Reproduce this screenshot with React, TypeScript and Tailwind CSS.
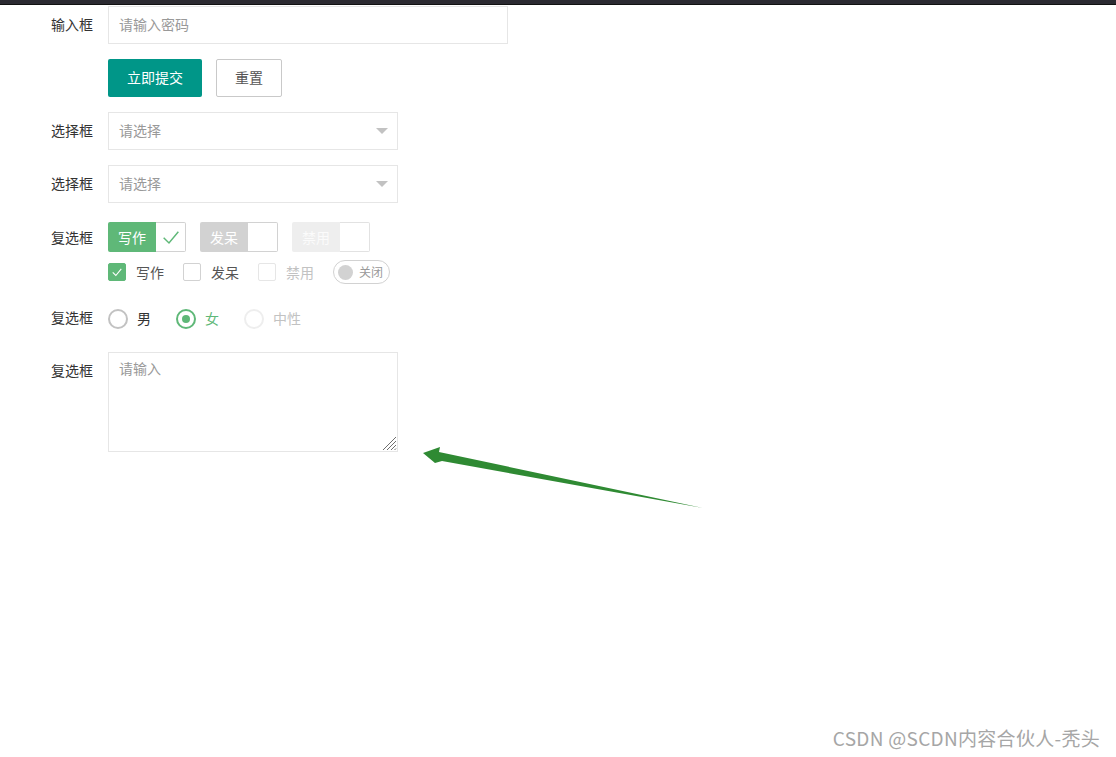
import { useState } from "react";

const FONT = { fontFamily: '"Noto Sans CJK SC", "Noto Sans", sans-serif' };

function Label({ children }: { children: string }) {
  return (
    <label className="w-[108px] shrink-0 pr-[15px] text-right text-sm leading-[36px] text-[#333]">
      {children}
    </label>
  );
}

function SelectBox() {
  return (
    <div className="flex h-[38px] w-[290px] items-center justify-between border border-[#e6e6e6] bg-white pb-[2px] pl-[10px] pr-[9px] text-sm text-[#999]">
      <span>请选择</span>
      <span className="mt-[2px] h-0 w-0 border-x-[6px] border-t-[6px] border-x-transparent border-t-[#c2c2c2]" />
    </div>
  );
}

function Check({ size = 18, color = "#fff", width = 1.4 }: { size?: number; color?: string; width?: number }) {
  return (
    <svg width={size} height={size} viewBox="0 0 18 18" fill="none">
      <path d="M3.5 9.5 L7.5 13.5 L14.5 5" stroke={color} strokeWidth={width} />
    </svg>
  );
}

function PrimaryCheckbox({ text, state }: { text: string; state: "on" | "off" | "disabled" }) {
  const block =
    state === "on" ? "bg-[#5fb878] text-white" : state === "off" ? "bg-[#d2d2d2] text-white" : "bg-[#eee] text-[#fbfbfb]";
  return (
    <div className="flex h-[30px] w-[78px]">
      <span className={`flex w-[48px] items-center justify-center rounded-l-[2px] pb-[1px] text-sm ${block}`}>{text}</span>
      <span
        className={`flex w-[30px] items-center justify-center rounded-r-[2px] border ${
          state === "disabled" ? "border-[#e2e2e2]" : "border-[#d2d2d2]"
        } border-l-0 bg-white`}
      >
        {state === "on" && <Check size={24} color="#5fb878" width={1.1} />}
      </span>
    </div>
  );
}

function SmallCheckbox({ text, state }: { text: string; state: "on" | "off" | "disabled" }) {
  return (
    <div className="mr-[19px] flex items-center">
      <span
        className={`flex h-[18px] w-[18px] items-center justify-center rounded-[2px] border ${
          state === "on"
            ? "border-[#5fb878] bg-[#5fb878]"
            : state === "off"
              ? "border-[#d2d2d2] bg-white"
              : "border-[#e6e6e6] bg-white"
        }`}
      >
        {state === "on" && <Check size={14} />}
      </span>
      <span className={`ml-[10px] pb-[1px] text-sm ${state === "disabled" ? "text-[#c2c2c2]" : "text-[#555]"}`}>
        {text}
      </span>
    </div>
  );
}

function Radio({ text, state }: { text: string; state: "on" | "off" | "disabled" }) {
  const ring =
    state === "on" ? "border-[#5fb878]" : state === "off" ? "border-[#c2c2c2]" : "border-[#eee]";
  const label = state === "on" ? "text-[#5fb878]" : state === "off" ? "text-[#333]" : "text-[#c2c2c2]";
  return (
    <div className="mr-[25px] flex items-center">
      <span className={`flex h-[20px] w-[20px] items-center justify-center rounded-full border-2 ${ring}`}>
        {state === "on" && <span className="h-[8px] w-[8px] rounded-full bg-[#5fb878]" />}
      </span>
      <span className={`ml-[9px] pb-[1px] text-sm ${label}`}>{text}</span>
    </div>
  );
}

export default function App() {
  const [pwd, setPwd] = useState("");
  return (
    <div className="relative h-[757px] w-full overflow-hidden bg-white" style={FONT}>
      <div className="h-[4px] bg-[#2b2a31]" />
      <div className="h-[1px] bg-[#111]" />

      <div className="pt-[1px]">
        <div className="flex">
          <Label>输入框</Label>
          <input
            type="password"
            value={pwd}
            onChange={(e) => setPwd(e.target.value)}
            placeholder="请输入密码"
            className="h-[38px] w-[400px] border border-[#e6e6e6] px-[10px] pb-[2px] text-sm outline-none placeholder:text-[#999]"
          />
        </div>

        <div className="mt-[15px] flex pl-[108px]">
          <button className="h-[38px] w-[94px] rounded-[2px] bg-[#009688] pb-[2px] text-sm text-white">立即提交</button>
          <button className="ml-[14px] h-[38px] w-[66px] rounded-[2px] border border-[#c9c9c9] bg-white pb-[2px] text-sm text-[#555]">
            重置
          </button>
        </div>

        <div className="mt-[15px] flex">
          <Label>选择框</Label>
          <SelectBox />
        </div>

        <div className="mt-[15px] flex">
          <Label>选择框</Label>
          <SelectBox />
        </div>

        <div className="mt-[15px] flex">
          <label className="w-[108px] shrink-0 pr-[15px] pt-[1px] text-right text-sm leading-[36px] text-[#333]">
            复选框
          </label>
          <div className="pt-[4px]">
            <div className="flex gap-[14px]">
              <PrimaryCheckbox text="写作" state="on" />
              <PrimaryCheckbox text="发呆" state="off" />
              <PrimaryCheckbox text="禁用" state="disabled" />
            </div>
            <div className="mt-[8px] flex h-[24px] items-center">
              <SmallCheckbox text="写作" state="on" />
              <SmallCheckbox text="发呆" state="off" />
              <SmallCheckbox text="禁用" state="disabled" />
              <div className="flex h-[24px] w-[57px] items-center rounded-full border border-[#d2d2d2] pl-[4px]">
                <span className="h-[15px] w-[15px] rounded-full bg-[#d2d2d2]" />
                <span className="ml-[6px] pb-[1px] text-xs text-[#999]">关闭</span>
              </div>
            </div>
          </div>
        </div>

        <div className="mt-[15px] flex h-[38px]">
          <Label>复选框</Label>
          <div className="flex h-[38px] items-center pt-[1px]">
            <Radio text="男" state="off" />
            <Radio text="女" state="on" />
            <Radio text="中性" state="disabled" />
          </div>
        </div>

        <div className="mt-[15px] flex">
          <label className="w-[108px] shrink-0 pr-[15px] text-right text-sm leading-[36px] text-[#333]">复选框</label>
          <div className="relative h-[100px] w-[290px]">
            <textarea
              placeholder="请输入"
              className="h-full w-full resize-none border border-[#e6e6e6] px-[10px] py-[5px] text-sm leading-[20px] outline-none placeholder:text-[#999]"
            />
            <svg className="absolute bottom-[1px] right-[1px]" width="16" height="16" viewBox="0 0 16 16">
              <path
                d="M15 2 L2 15 M15 6 L6 15 M15 10 L10 15 M15 13.5 L13.5 15"
                stroke="#6f6f6f"
                strokeWidth="1"
              />
            </svg>
          </div>
        </div>
      </div>

      {/* annotation arrow */}
      <svg className="absolute left-0 top-0" width="1116" height="757" viewBox="0 0 1116 757">
        <polygon points="423,453 440,447 439,452 703,508 442,461 435,463" fill="#2f8a33" />
      </svg>

      <div className="absolute bottom-[5px] right-[16px] text-[19px] tracking-[0.3px] text-[#a6a6a6]">
        CSDN @SCDN内容合伙人-秃头
      </div>
    </div>
  );
}
